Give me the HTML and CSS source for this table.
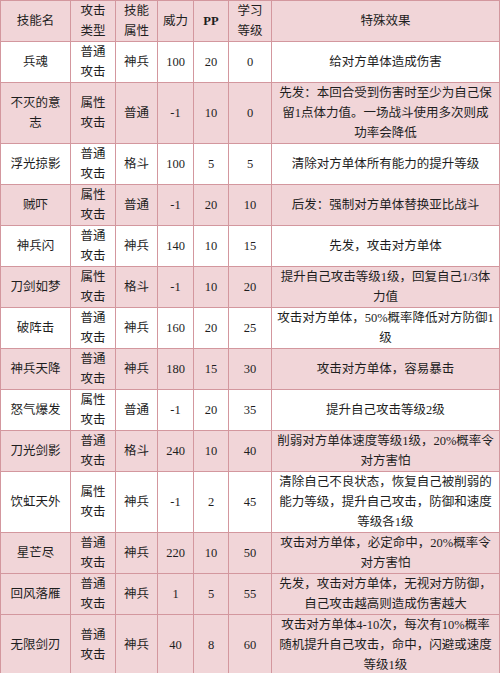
FILE: index.html
```html
<!DOCTYPE html>
<html lang="zh-CN">
<head>
<meta charset="utf-8">
<title>技能表</title>
<link rel="stylesheet" href="styles.css">
</head>
<body>
<table class="skills">
  <colgroup>
    <col class="c-name"><col class="c-type"><col class="c-attr"><col class="c-pow"><col class="c-pp"><col class="c-lv"><col class="c-eff">
  </colgroup>
  <thead>
    <tr class="pink">
      <th>技能名</th><th>攻击<br>类型</th><th>技能<br>属性</th><th>威力</th><th class="pp">PP</th><th>学习<br>等级</th><th>特殊效果</th>
    </tr>
  </thead>
  <tbody>
    <tr class="white"><td>兵魂</td><td>普通<br>攻击</td><td>神兵</td><td>100</td><td>20</td><td>0</td><td>给对方单体造成伤害</td></tr>
    <tr class="pink"><td>不灭的意<br>志</td><td>属性<br>攻击</td><td>普通</td><td>-1</td><td>10</td><td>0</td><td>先发：本回合受到伤害时至少为自己保<br>留1点体力值。一场战斗使用多次则成<br>功率会降低</td></tr>
    <tr class="white"><td>浮光掠影</td><td>普通<br>攻击</td><td>格斗</td><td>100</td><td>5</td><td>5</td><td>清除对方单体所有能力的提升等级</td></tr>
    <tr class="pink"><td>贼吓</td><td>属性<br>攻击</td><td>普通</td><td>-1</td><td>20</td><td>10</td><td>后发：强制对方单体替换亚比战斗</td></tr>
    <tr class="white"><td>神兵闪</td><td>普通<br>攻击</td><td>神兵</td><td>140</td><td>10</td><td>15</td><td>先发，攻击对方单体</td></tr>
    <tr class="pink"><td>刀剑如梦</td><td>属性<br>攻击</td><td>格斗</td><td>-1</td><td>10</td><td>20</td><td>提升自己攻击等级1级，回复自己1/3体<br>力值</td></tr>
    <tr class="white"><td>破阵击</td><td>普通<br>攻击</td><td>神兵</td><td>160</td><td>20</td><td>25</td><td>攻击对方单体，50%概率降低对方防御1<br>级</td></tr>
    <tr class="pink"><td>神兵天降</td><td>普通<br>攻击</td><td>神兵</td><td>180</td><td>15</td><td>30</td><td>攻击对方单体，容易暴击</td></tr>
    <tr class="white"><td>怒气爆发</td><td>属性<br>攻击</td><td>普通</td><td>-1</td><td>20</td><td>35</td><td>提升自己攻击等级2级</td></tr>
    <tr class="pink"><td>刀光剑影</td><td>普通<br>攻击</td><td>格斗</td><td>240</td><td>10</td><td>40</td><td>削弱对方单体速度等级1级，20%概率令<br>对方害怕</td></tr>
    <tr class="white"><td>饮虹天外</td><td>属性<br>攻击</td><td>神兵</td><td>-1</td><td>2</td><td>45</td><td>清除自己不良状态，恢复自己被削弱的<br>能力等级，提升自己攻击，防御和速度<br>等级各1级</td></tr>
    <tr class="pink"><td>星芒尽</td><td>普通<br>攻击</td><td>神兵</td><td>220</td><td>10</td><td>50</td><td>攻击对方单体，必定命中，20%概率令<br>对方害怕</td></tr>
    <tr class="pink"><td>回风落雁</td><td>普通<br>攻击</td><td>神兵</td><td>1</td><td>5</td><td>55</td><td>先发，攻击对方单体，无视对方防御，<br>自己攻击越高则造成伤害越大</td></tr>
    <tr class="pink"><td>无限剑刃</td><td>普通<br>攻击</td><td>神兵</td><td>40</td><td>8</td><td>60</td><td>攻击对方单体4-10次，每次有10%概率<br>随机提升自己攻击，命中，闪避或速度<br>等级1级</td></tr>
  </tbody>
</table>
</body>
</html>
```

FILE: styles.css
```css
html, body {
  margin: 0;
  padding: 0;
  background: #ffffff;
}

.skills {
  width: 499px;
  table-layout: fixed;
  border-collapse: collapse;
  font-family: "Liberation Serif", "Noto Sans CJK SC", serif;
  font-size: 12.5px;
  line-height: 20px;
  color: #1e1e1e;
  border: 1px solid #c27880;
}

.c-name { width: 70px; }
.c-type { width: 45px; }
.c-attr { width: 42px; }
.c-pow { width: 36px; }
.c-pp { width: 35px; }
.c-lv { width: 43px; }
.c-eff { width: 228px; }

.skills th,
.skills td {
  border: 1px solid #d3979e;
  padding: 0;
  text-align: center;
  vertical-align: middle;
  font-weight: normal;
  white-space: nowrap;
}

.skills th.pp {
  font-weight: bold;
}

.pink {
  background: #f1d5d8;
}

.white {
  background: #ffffff;
}
```
